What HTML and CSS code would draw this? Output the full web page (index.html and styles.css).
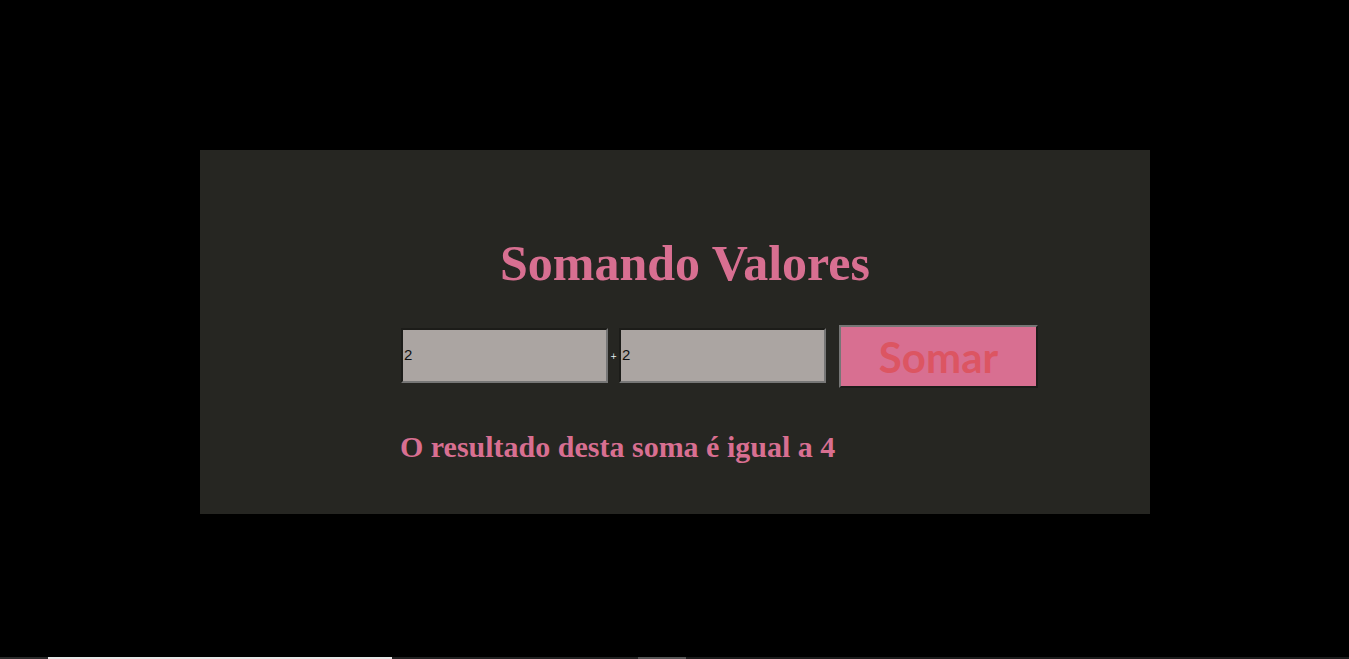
FILE: index.html
```html
<!DOCTYPE html>
<html lang="pt-BR">
<head>
<meta charset="utf-8">
<title>Somando Valores</title>
<link rel="stylesheet" href="styles.css">
</head>
<body>
<main class="panel">
  <h1 class="title">Somando Valores</h1>
  <form class="row">
    <input class="num" type="text" value="2">
    <span class="plus">+</span>
    <input class="num" type="text" value="2">
    <button class="btn" type="button">Somar</button>
  </form>
  <p class="result">O resultado desta soma é igual a 4</p>
</main>
<div class="scrollstrip">
  <span class="seg seg-a"></span>
  <span class="seg seg-b"></span>
  <span class="seg seg-c"></span>
  <span class="seg seg-d"></span>
  <span class="seg seg-e"></span>
</div>
</body>
</html>
```

FILE: styles.css
```css
html, body {
  margin: 0;
  padding: 0;
  background: #000;
}

body {
  height: 659px;
  overflow: hidden;
}

.panel {
  box-sizing: border-box;
  width: 950px;
  height: 364px;
  margin: 150px 0 0 200px;
  padding: 88px 0 0 200px;
  background: #262622;
  display: flex;
  flex-direction: column;
}

.title {
  margin: 0 0 0 100px;
  font-family: "Liberation Serif", "Times New Roman", serif;
  font-weight: bold;
  font-size: 50px;
  line-height: 1;
  color: #d86f91;
}

.row {
  margin: 37px 0 0 1px;
  display: flex;
  align-items: flex-start;
  height: 63px;
}

.num {
  box-sizing: border-box;
  width: 207px;
  height: 55px;
  margin: 3px 0 0 0;
  padding: 0 1px 2px;
  border: 2px solid;
  border-color: #1c1c19 #767676 #767676 #1c1c19;
  background: #aba5a2;
  color: #111;
  font-family: "Liberation Sans", Arial, sans-serif;
  font-size: 15px;
  outline: none;
}

.plus {
  align-self: center;
  width: 11px;
  text-align: center;
  font-family: "DejaVu Sans", sans-serif;
  font-size: 8px;
  color: #e8f4f4;
}

.btn {
  box-sizing: border-box;
  width: 199px;
  height: 63px;
  margin: 0 0 0 13px;
  padding: 0;
  border: 2px solid;
  border-color: #767676 #1c1c19 #1c1c19 #767676;
  background: #d86f91;
  color: #dc5562;
  font-family: "Comic Sans MS", "Lato", "Noto Sans", sans-serif;
  font-weight: bold;
  font-size: 42px;
  line-height: 1;
}

.result {
  margin: 44px 0 0 0;
  font-family: "Liberation Serif", "Times New Roman", serif;
  font-weight: bold;
  font-size: 30px;
  line-height: 1;
  color: #d86f91;
}

.scrollstrip {
  position: fixed;
  left: 0;
  right: 0;
  bottom: 0;
  height: 2px;
  display: flex;
}

.seg { display: block; height: 2px; }
.seg-a { width: 48px; background: #2b2b2b; }
.seg-b { width: 344px; background: #e6e6e6; }
.seg-c { width: 246px; background: #222; }
.seg-d { width: 48px; background: #555; }
.seg-e { flex: 1; background: #1c1c1c; }
```
